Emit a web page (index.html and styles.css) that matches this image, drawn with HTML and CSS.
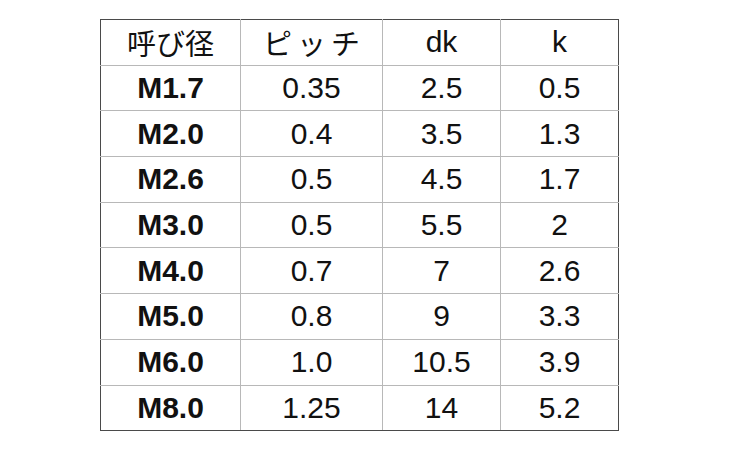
FILE: index.html
```html
<!DOCTYPE html>
<html lang="ja">
<head>
<meta charset="utf-8">
<link rel="stylesheet" href="styles.css">
</head>
<body>
<div class="wrap">
<table class="spec">
<colgroup><col class="c1"><col class="c2"><col class="c3"><col class="c4"></colgroup>
<thead>
<tr><th class="jp">呼び径</th><th class="jp kana">ピッチ</th><th>dk</th><th>k</th></tr>
</thead>
<tbody>
<tr><td class="size">M1.7</td><td>0.35</td><td>2.5</td><td>0.5</td></tr>
<tr><td class="size">M2.0</td><td>0.4</td><td>3.5</td><td>1.3</td></tr>
<tr><td class="size">M2.6</td><td>0.5</td><td>4.5</td><td>1.7</td></tr>
<tr><td class="size">M3.0</td><td>0.5</td><td>5.5</td><td>2</td></tr>
<tr><td class="size">M4.0</td><td>0.7</td><td>7</td><td>2.6</td></tr>
<tr><td class="size">M5.0</td><td>0.8</td><td>9</td><td>3.3</td></tr>
<tr><td class="size">M6.0</td><td>1.0</td><td>10.5</td><td>3.9</td></tr>
<tr><td class="size">M8.0</td><td>1.25</td><td>14</td><td>5.2</td></tr>
</tbody>
</table>
</div>
</body>
</html>
```
FILE: styles.css
```css
html, body {
  margin: 0;
  padding: 0;
  background: #fff;
}
.wrap {
  padding: 19px 0 0 100px;
}
.spec {
  border-collapse: collapse;
  table-layout: fixed;
  width: 519px;
  border: 1px solid #4a4a4a;
  font-family: "Liberation Sans", Arial, "Noto Sans CJK JP", sans-serif;
  font-size: 30px;
  color: #111;
}
.c1 { width: 140px; }
.c2 { width: 142px; }
.c3 { width: 118px; }
.c4 { width: 118px; }
.spec th, .spec td {
  border: 1px solid #b8b8b8;
  height: 44.7px;
  padding: 0;
  text-align: center;
  vertical-align: middle;
  font-weight: 400;
  line-height: 1;
}
.spec th.jp {
  font-family: "Noto Sans CJK JP", sans-serif;
  font-weight: 400;
  font-size: 29px;
}
.spec th.kana {
  letter-spacing: 5px;
  text-indent: 5px;
}
.spec td.size {
  font-weight: 700;
}
.spec tr > :first-child { border-left-color: #4a4a4a; }
.spec tr > :last-child { border-right-color: #4a4a4a; }
.spec thead tr > * { border-top-color: #4a4a4a; }
.spec tbody tr:last-child > * { border-bottom-color: #4a4a4a; }
```
